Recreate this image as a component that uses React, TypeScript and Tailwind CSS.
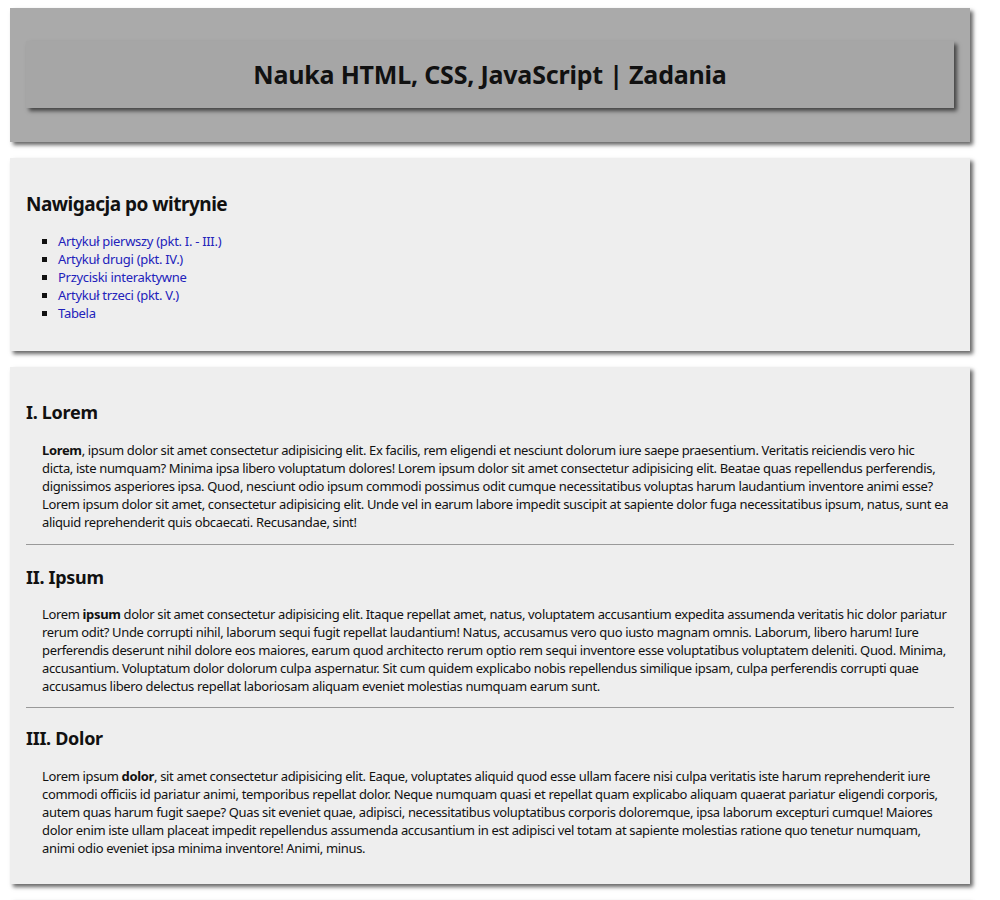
import React from "react";

const font = { fontFamily: '"Noto Sans", "Open Sans", sans-serif' };

const links = [
  "Artykuł pierwszy (pkt. I. - III.)",
  "Artykuł drugi (pkt. IV.)",
  "Przyciski interaktywne",
  "Artykuł trzeci (pkt. V.)",
  "Tabela",
];

export default function App() {
  return (
    <div className="min-h-screen bg-white pt-2 pl-[10px] text-[#111]" style={font}>
      <div className="w-[960px] flex flex-col gap-4">
        {/* Header */}
        <header className="bg-[#aaaaaa] px-4 pt-[33px] pb-[34px] shadow-[3px_3px_4px_rgba(0,0,0,0.6)]">
          <div className="bg-[#a6a6a6] h-[67px] flex items-center justify-center shadow-[3px_3px_4px_rgba(0,0,0,0.6)]">
            <h1 className="text-[25px] font-bold leading-none tracking-[-0.2px]">Nauka HTML, CSS, JavaScript | Zadania</h1>
          </div>
        </header>

        {/* Navigation */}
        <nav className="bg-[#eeeeee] px-4 pt-[34px] pb-[29px] shadow-[3px_3px_4px_rgba(0,0,0,0.6)]">
          <h2 className="text-[19px] font-bold leading-6 tracking-[-0.5px] mb-[16px]">Nawigacja po witrynie</h2>
          <ul className="list-[square] pl-[32px] text-[13px] leading-[18px] tracking-[-0.3px]">
            {links.map((l) => (
              <li key={l}>
                <a href="#" className="text-[#2222bb]">{l}</a>
              </li>
            ))}
          </ul>
        </nav>

        {/* Article */}
        <main className="bg-[#eeeeee] px-4 pt-[33px] pb-[27px] shadow-[3px_3px_4px_rgba(0,0,0,0.6)] text-[13px] leading-[18px] tracking-[-0.35px]">
          <h3 className="text-[18px] font-bold leading-6 tracking-[-0.3px]">I. Lorem</h3>
          <p className="mt-[17px] pl-4">
            <b>Lorem</b>, ipsum dolor sit amet consectetur adipisicing elit. Ex facilis, rem eligendi et nesciunt dolorum iure saepe praesentium. Veritatis reiciendis vero hic<br />
            dicta, iste numquam? Minima ipsa libero voluptatum dolores! Lorem ipsum dolor sit amet consectetur adipisicing elit. Beatae quas repellendus perferendis,<br />
            dignissimos asperiores ipsa. Quod, nesciunt odio ipsum commodi possimus odit cumque necessitatibus voluptas harum laudantium inventore animi esse?<br />
            Lorem ipsum dolor sit amet, consectetur adipisicing elit. Unde vel in earum labore impedit suscipit at sapiente dolor fuga necessitatibus ipsum, natus, sunt ea<br />
            aliquid reprehenderit quis obcaecati. Recusandae, sint!
          </p>
          <hr className="mt-[13px] border-t border-[#999]" />
          <h3 className="mt-[20px] text-[18px] font-bold leading-6 tracking-[-0.3px]">II. Ipsum</h3>
          <p className="mt-[16px] pl-4">
            Lorem <b>ipsum</b> dolor sit amet consectetur adipisicing elit. Itaque repellat amet, natus, voluptatem accusantium expedita assumenda veritatis hic dolor pariatur<br />
            rerum odit? Unde corrupti nihil, laborum sequi fugit repellat laudantium! Natus, accusamus vero quo iusto magnam omnis. Laborum, libero harum! Iure<br />
            perferendis deserunt nihil dolore eos maiores, earum quod architecto rerum optio rem sequi inventore esse voluptatibus voluptatem deleniti. Quod. Minima,<br />
            accusantium. Voluptatum dolor dolorum culpa aspernatur. Sit cum quidem explicabo nobis repellendus similique ipsam, culpa perferendis corrupti quae<br />
            accusamus libero delectus repellat laboriosam aliquam eveniet molestias numquam earum sunt.
          </p>
          <hr className="mt-[12px] border-t border-[#999]" />
          <h3 className="mt-[18px] text-[18px] font-bold leading-6 tracking-[-0.3px]">III. Dolor</h3>
          <p className="mt-[17px] pl-4">
            Lorem ipsum <b>dolor</b>, sit amet consectetur adipisicing elit. Eaque, voluptates aliquid quod esse ullam facere nisi culpa veritatis iste harum reprehenderit iure<br />
            commodi officiis id pariatur animi, temporibus repellat dolor. Neque numquam quasi et repellat quam explicabo aliquam quaerat pariatur eligendi corporis,<br />
            autem quas harum fugit saepe? Quas sit eveniet quae, adipisci, necessitatibus voluptatibus corporis doloremque, ipsa laborum excepturi cumque! Maiores<br />
            dolor enim iste ullam placeat impedit repellendus assumenda accusantium in est adipisci vel totam at sapiente molestias ratione quo tenetur numquam,<br />
            animi odio eveniet ipsa minima inventore! Animi, minus.
          </p>
        </main>

        {/* Next article, only its top edge is in view */}
        <section className="bg-[#eeeeee] h-[120px] shadow-[3px_3px_4px_rgba(0,0,0,0.6)]" />
      </div>
    </div>
  );
}
